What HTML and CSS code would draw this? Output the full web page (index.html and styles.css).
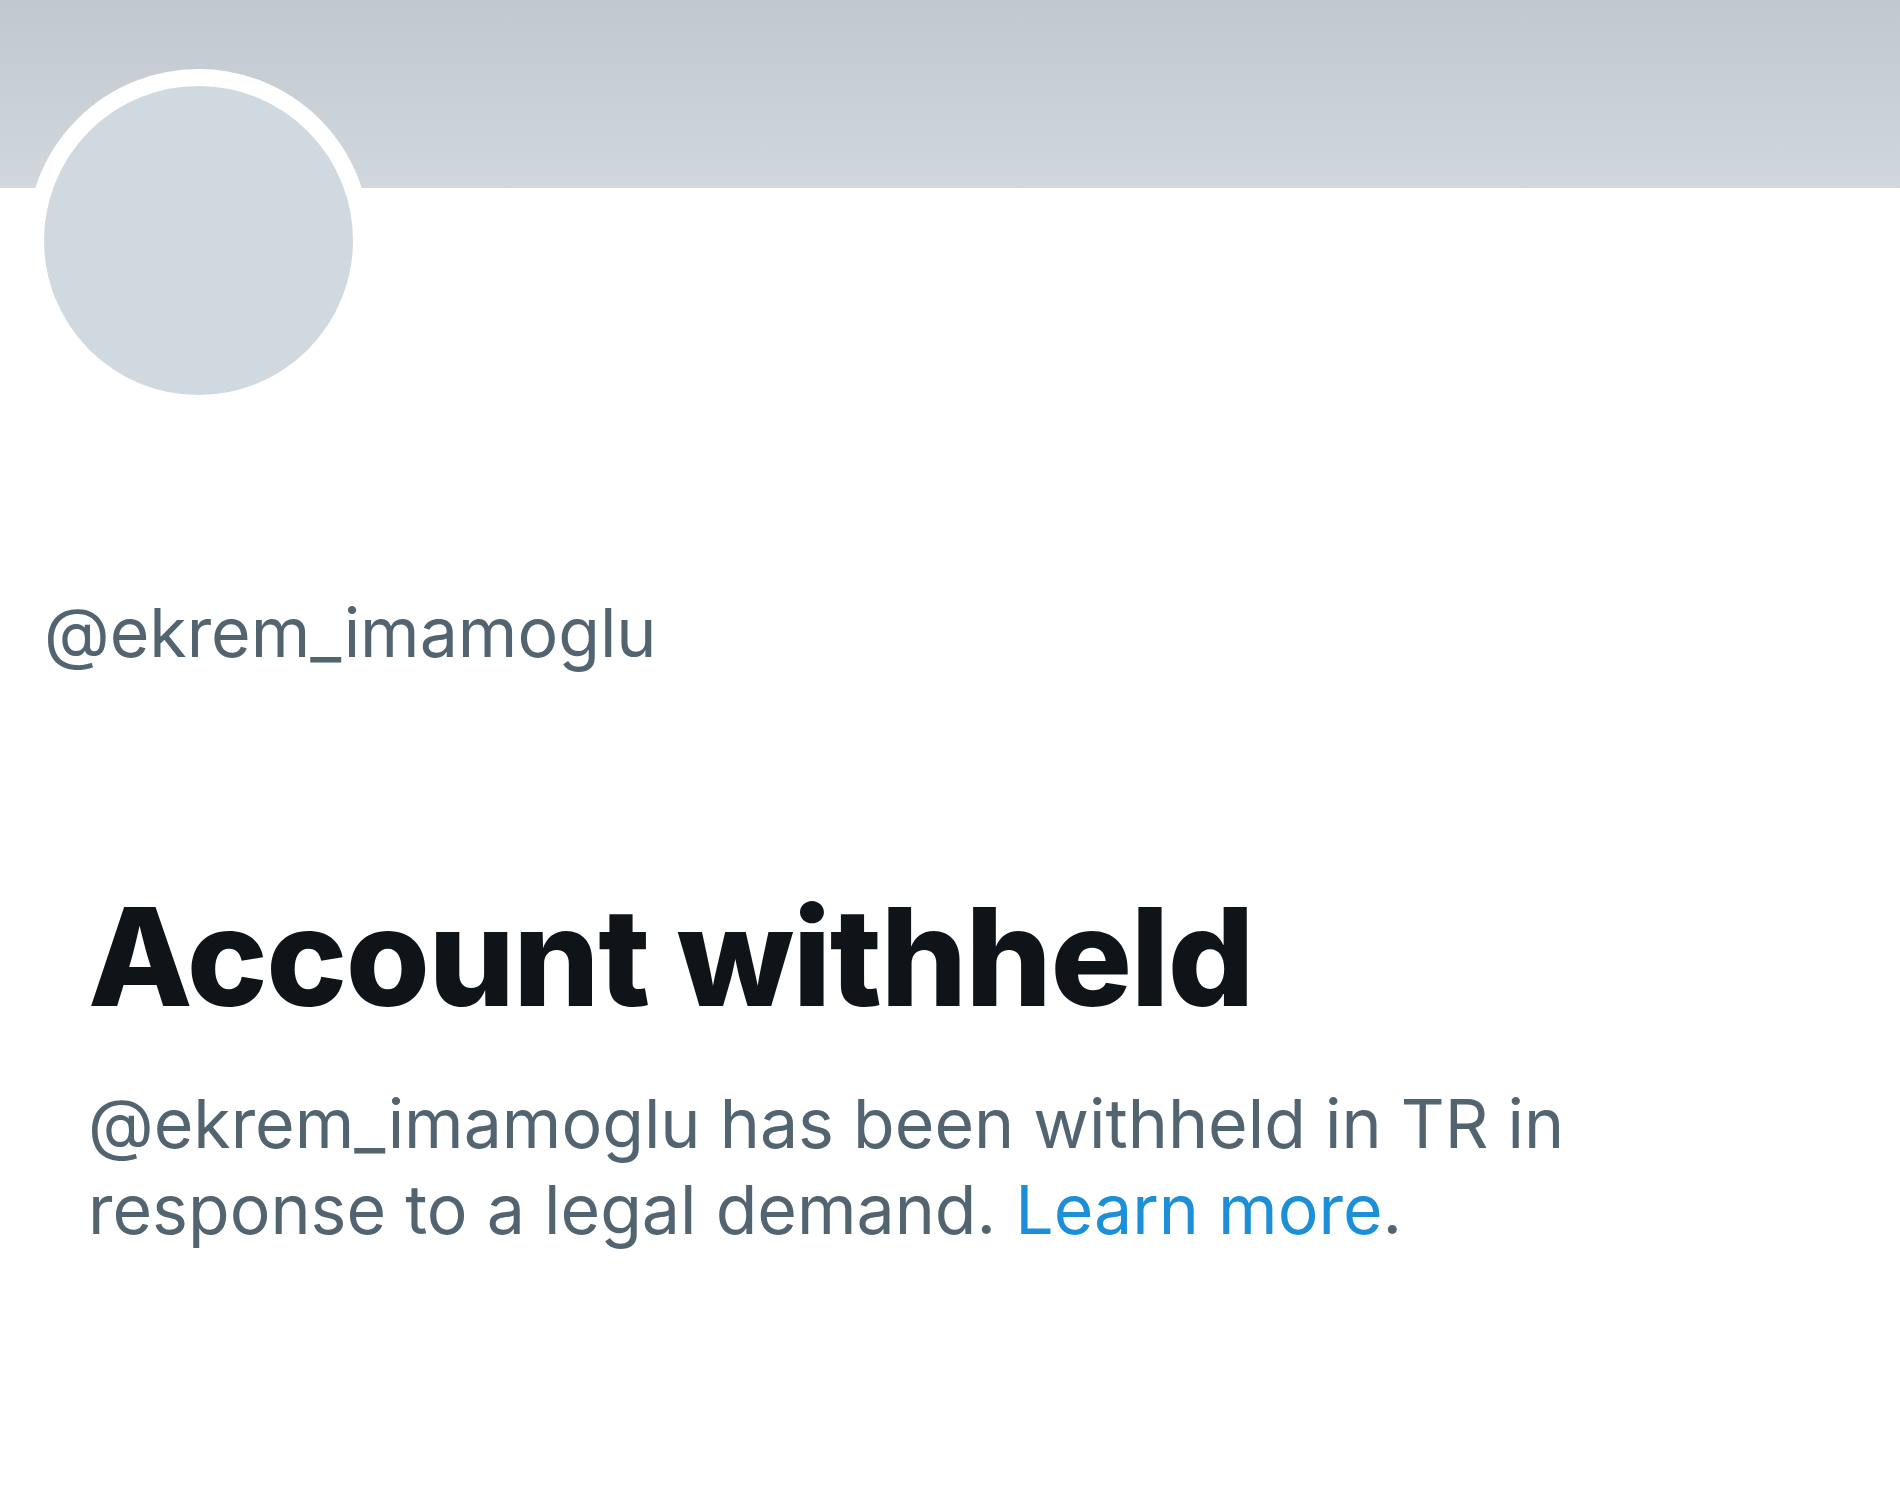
FILE: index.html
```html
<!DOCTYPE html>
<html lang="en">
<head>
<meta charset="utf-8">
<title>Account withheld</title>
<link rel="stylesheet" href="styles.css">
</head>
<body>
<div class="page">
  <div class="banner"></div>
  <div class="profile">
    <div class="avatar"></div>
    <div class="handle">@ekrem_imamoglu</div>
  </div>
  <div class="notice">
    <h1 class="notice-title">Account withheld</h1>
    <p class="notice-text">@ekrem_imamoglu has been withheld in TR in response to a legal demand. <a class="notice-link" href="#">Learn more</a>.</p>
  </div>
</div>
</body>
</html>
```
FILE: styles.css
```css
html, body {
  margin: 0;
  padding: 0;
  background: #ffffff;
}
body {
  font-family: Inter, "Noto Sans", "Liberation Sans", sans-serif;
  width: 1900px;
  height: 1492px;
  overflow: hidden;
}
.page {
  display: flex;
  flex-direction: column;
}
.banner {
  height: 188px;
  background: linear-gradient(to bottom, #c1c8cf 0%, #c9d1d7 55%, #d0d8dd 100%);
}
.profile {
  display: flex;
  flex-direction: column;
  align-items: flex-start;
  margin-top: -119px;
  padding-left: 27px;
}
.avatar {
  width: 309px;
  height: 309px;
  border-radius: 50%;
  background: #d0d9df;
  border: 17px solid #ffffff;
}
.handle {
  margin-top: 180px;
  margin-left: 17px;
  font-size: 68px;
  line-height: 80px;
  color: #536471;
  font-weight: 400;
}
.notice {
  padding-left: 88px;
  margin-top: 210px;
  width: 1620px;
}
.notice-title {
  margin: 0;
  font-size: 136px;
  line-height: 150px;
  font-weight: 800;
  color: #0f1419;
  letter-spacing: -1.5px;
}
.notice-text {
  margin: 48px 0 0 0;
  font-size: 68px;
  line-height: 86px;
  color: #536471;
}
.notice-link {
  color: #1d8fd8;
  text-decoration: none;
}
```
